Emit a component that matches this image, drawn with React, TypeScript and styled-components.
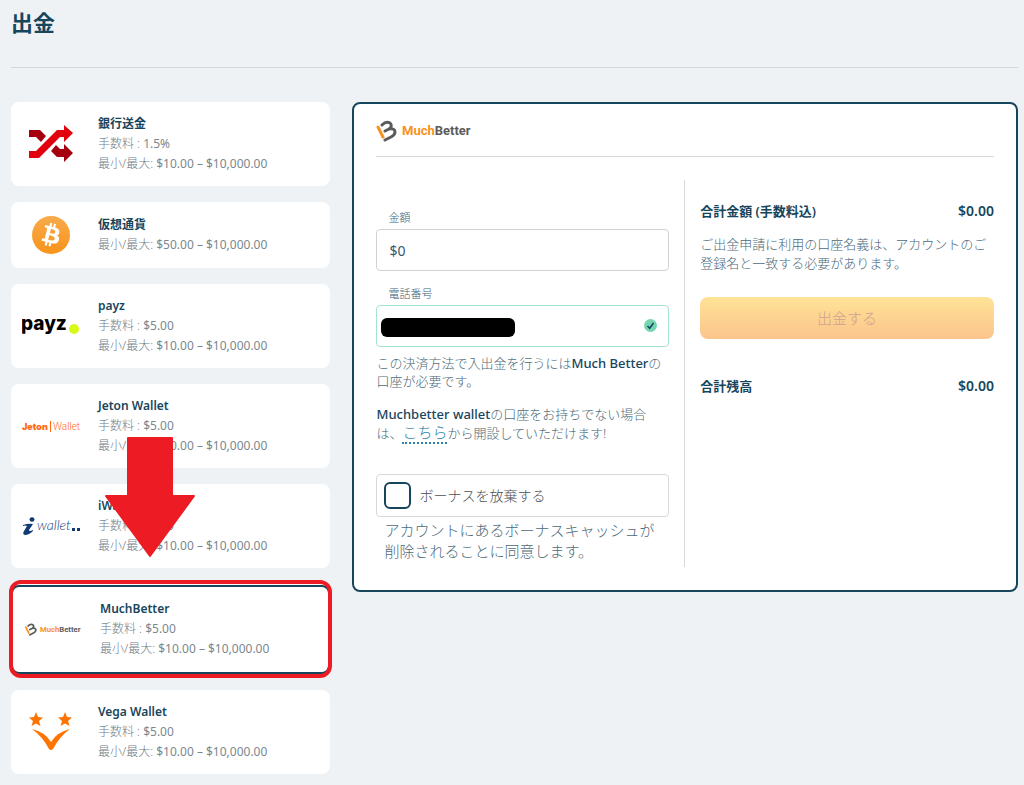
import React, { useState } from "react";
import styled, { createGlobalStyle, css } from "styled-components";

const GlobalStyle = createGlobalStyle`
  *, *::before, *::after { box-sizing: border-box; }
  body {
    margin: 0;
    background: #eef2f5;
    color: #4d6a79;
    font-family: "Noto Sans", "Noto Sans CJK JP", sans-serif;
    font-size: 13px;
    font-weight: 300;
    line-height: 18px;
  }
  h1, h2, h3, p { margin: 0; }
  input, button { font: inherit; }
`;

const ink = "#17455c";
const rule = "#d5dadd";
const red = "#ed1c24";

const Page = styled.div`
  padding: 0 6px 11px 11px;
`;

const PageHeader = styled.header`
  height: 68px;
  padding-top: 6px;
  border-bottom: 1px solid #d0d6da;
`;

const PageTitle = styled.h1`
  color: ${ink};
  font-size: 22px;
  line-height: 32px;
  font-weight: 700;
`;

const Columns = styled.main`
  display: grid;
  grid-template-columns: minmax(0, 12fr) minmax(0, 25fr);
  gap: 22px;
  align-items: start;
  padding-top: 34px;
`;

const MethodList = styled.ul`
  list-style: none;
  margin: 0;
  padding: 0;
  display: flex;
  flex-direction: column;
  gap: 16px;
`;

const MethodItem = styled.li<{ $selected?: boolean }>`
  position: relative;
  ${(p) => p.$selected && css`margin-top: 1px;`}
`;

const MethodCard = styled.button<{ $selected?: boolean }>`
  width: 100%;
  min-height: 66px;
  display: flex;
  align-items: center;
  gap: 18px;
  padding: 12px 11px;
  border: 0 solid ${ink};
  border-radius: 8px;
  background: #fff;
  color: #6f7d85;
  font-size: 12px;
  line-height: 20px;
  text-align: left;
  cursor: pointer;
  ${(p) =>
    p.$selected &&
    css`
      border-width: 2px;
      padding: 12px 11px 13px;
      box-shadow: 0 0 0 2px #fff;
    `}
`;

const LogoSlot = styled.span`
  flex: 0 0 58px;
  display: flex;
  justify-content: center;
  svg { display: block; }
`;

const MethodText = styled.span`
  display: flex;
  flex-direction: column;
`;

const MethodName = styled.strong`
  color: ${ink};
  font-weight: 600;
`;

const Figure = styled.span`
  color: #7b878e;
  font-weight: 400;
`;

const Highlight = styled.span`
  position: absolute;
  inset: -5px -2px -4px;
  border: 4px solid ${red};
  border-radius: 12px;
  pointer-events: none;
`;

const Pointer = styled.svg`
  position: absolute;
  left: 94px;
  bottom: calc(100% + 28px);
  z-index: 1;
  pointer-events: none;
`;

const Panel = styled.section`
  padding: 0 22px 23px;
  border: 2px solid ${ink};
  border-radius: 8px;
  background: #fff;
`;

const PanelHeader = styled.h2`
  height: 53px;
  padding-top: 16px;
  border-bottom: 1px solid ${rule};
  line-height: 0;
`;

const PanelBody = styled.div`
  display: grid;
  grid-template-columns: 1fr 1fr;
  margin-top: 23px;
`;

const Form = styled.form`
  min-width: 0;
  padding: 30px 15px 5px 0;
  border-right: 1px solid ${rule};
`;

const Field = styled.div`
  display: flex;
  flex-direction: column;
  gap: 3px;
  & + & { margin-top: 15px; }
`;

const FieldLabel = styled.label`
  padding-left: 12px;
  color: #3d6275;
  font-size: 11px;
  line-height: 16px;
`;

const InputBox = styled.div`
  position: relative;
`;

const TextInput = styled.input<{ $valid?: boolean }>`
  display: block;
  width: 100%;
  height: 42px;
  padding: 0 12px;
  border: 1px solid ${(p) => (p.$valid ? "#a3e5cb" : "#d0d3d5")};
  border-radius: 4px;
  background: #fff;
  color: #35596b;
  font-size: 14px;
  font-weight: 400;
`;

const Redaction = styled.span`
  position: absolute;
  left: 5px;
  top: 13px;
  width: 134px;
  height: 19px;
  border-radius: 6px;
  background: #000;
`;

const ValidMark = styled.svg`
  position: absolute;
  right: 12px;
  top: 14px;
`;

const Note = styled.p`
  margin-top: 15px;
  ${Field} + & { margin-top: 7px; }
  b { color: ${ink}; font-weight: 500; }
`;

const SignUpLink = styled.a`
  color: #2d83ac;
  font-size: 15px;
  text-decoration: none;
  border-bottom: 2px dotted #2d83ac;
`;

const BonusRow = styled.label`
  display: flex;
  align-items: center;
  gap: 8px;
  height: 43px;
  margin-top: 32px;
  padding: 0 7px;
  border: 1px solid ${rule};
  border-radius: 4px;
  color: #4b4f52;
  font-size: 14px;
`;

const CheckBox = styled.input`
  appearance: none;
  width: 27px;
  height: 27px;
  margin: 0;
  border: 2px solid ${ink};
  border-radius: 6px;
  background: #fff;
  &:checked { box-shadow: inset 0 0 0 5px #fff; background: ${ink}; }
`;

const BonusNote = styled.p`
  margin-top: 3px;
  padding-left: 8px;
  font-size: 15px;
  line-height: 21px;
`;

const Summary = styled.div`
  min-width: 0;
  padding: 21px 0 0 15px;
`;

const TotalRow = styled.div`
  display: flex;
  justify-content: space-between;
  color: ${ink};
  font-weight: 600;
  line-height: 20px;
`;

const TotalAmount = styled.span`
  font-size: 14px;
`;

const SummaryNote = styled.p`
  margin-top: 14px;
  line-height: 19px;
`;

const SubmitButton = styled.button`
  display: block;
  width: 100%;
  height: 42px;
  margin: 24px 0 37px;
  border: 0;
  border-radius: 8px;
  background: linear-gradient(#ffe396, #fbc48c);
  color: #cfa08f;
  font-size: 15px;
  line-height: 18px;
`;

function ShuffleLogo() {
  return (
    <svg width="46" height="40" viewBox="0 0 46 40" aria-hidden="true">
      <path d="M1 6h11l6 6-5 6-5-5H1z" fill="#a5000f" />
      <path d="M23 27l5-6 4 4h4v-5l9 9-9 9v-5h-7z" fill="#a5000f" />
      <path d="M1 34v-7h7L29 6h7V1l9 8-9 9v-5h-4L11 34z" fill="#e2000f" />
    </svg>
  );
}

function BitcoinLogo() {
  return (
    <svg width="38" height="38" viewBox="0 0 64 64" aria-hidden="true">
      <defs>
        <linearGradient id="coin" x1="0" y1="0" x2="0" y2="1">
          <stop offset="0" stopColor="#f9aa4b" />
          <stop offset="1" stopColor="#f7931a" />
        </linearGradient>
      </defs>
      <circle cx="32" cy="32" r="32" fill="url(#coin)" />
      <path
        fill="#fff"
        d="M46.1 27.4c.6-4.2-2.6-6.5-7-8l1.400-5.700-3.500-.9-1.400 5.600c-.9-.2-1.900-.4-2.800-.7l1.400-5.600-3.500-.9-1.400 5.700c-.8-.2-1.500-.3-2.200-.5l-4.800-1.200-.9 3.700s2.600.6 2.500.6c1.400.4 1.700 1.300 1.600 2l-3.900 15.800c-.2.4-.6 1.100-1.600.8 0 .1-2.500-.6-2.500-.6l-1.700 4 4.500 1.100 2.500.7-1.400 5.700 3.500.9 1.400-5.700c1 .3 1.900.5 2.800.7l-1.400 5.700 3.500.9 1.400-5.700c6 1.100 10.500.7 12.400-4.700 1.500-4.400-.1-6.900-3.200-8.500 2.300-.5 4-2 4.500-5.200zm-8 11.300c-1.100 4.400-8.400 2-10.800 1.400l1.900-7.700c2.400.6 10 1.800 8.900 6.300zm1.100-11.400c-1 4-7.100 2-9.100 1.500l1.800-7c2 .5 8.400 1.400 7.300 5.500z"
      />
    </svg>
  );
}

function PayzLogo() {
  return (
    <svg width="58" height="26" viewBox="0 0 58 26" aria-hidden="true">
      <text x="-1" y="17" fontFamily="Inter" fontWeight="800" fontSize="19">payz</text>
      <circle cx="52" cy="16" r="5" fill="#d8fb16" />
    </svg>
  );
}

function JetonLogo() {
  return (
    <svg width="58" height="16" viewBox="0 0 58 16" fill="#ff6a13" aria-hidden="true">
      <text x="0" y="12" fontFamily="Inter" fontWeight="900" fontSize="9">Jeton</text>
      <path d="M28 3h1v11h-1z" />
      <text x="31" y="12" fontFamily="Roboto" fontWeight="300" fontSize="10">Wallet</text>
    </svg>
  );
}

function IWalletLogo() {
  return (
    <svg width="58" height="20" viewBox="0 0 58 20" fill="#123a75" aria-hidden="true">
      <ellipse cx="10" cy="3.500" rx="2.500" ry="2.200" />
      <path d="M1 9q6-2 10-1L7 14q0 2 4 0l0 1q-4 4-8 4-3-1-1-4l3-5q-2-1-4 0z" />
      <text x="15" y="14" fontFamily="Lato" fontStyle="italic" fontSize="14">wallet</text>
      <path d="M50 12h3v3h-3zM55 12h3v3h-3z" />
    </svg>
  );
}

function MuchBetterLogo({ width }: { width: number }) {
  return (
    <svg width={width} height={Math.round((width * 22) / 96)} viewBox="0 0 96 22" role="img" aria-label="MuchBetter">
      <g fill="none" strokeWidth="3" strokeLinecap="round" strokeLinejoin="round">
        <path d="M2 7l5 10" stroke="#f7931e" />
        <path
          d="M6 5q4-4 8-2 3 3-1 6l-4 2m4-2q6-1 6 3 0 3-4 5l-6 3"
          stroke="#5b5b5d"
        />
      </g>
      <text x="26" y="15" fontFamily="Roboto" fontWeight="700" fontSize="13" fill="#5b5b5d">
        <tspan fill="#f7931e">Much</tspan>Better
      </text>
    </svg>
  );
}

function VegaLogo() {
  return (
    <svg width="44" height="40" viewBox="0 0 44 40" fill="#ff7300" aria-hidden="true">
      <path d="M7 0l2 5 5 .5-4 3.500 1.500 5L7 11.500 2.500 14 4 9 0 5.500 5 5z" />
      <path d="M36 0l2 5 5 .5-4 3.500 1.500 5-4.500-2.500L31.500 14 33 9l-4-3.500L34 5z" />
      <path d="M3 17q13 3 19 13Q28 20 41 17 31 24 24 37q-2 2-4 0Q14 25 3 17z" />
    </svg>
  );
}

type Method = {
  name: string;
  fee?: string;
  range: string;
  logo: React.ReactNode;
  selected?: boolean;
};

const methods: Method[] = [
  { name: "銀行送金", fee: "1.5%", range: "$10.00 – $10,000.00", logo: <ShuffleLogo /> },
  { name: "仮想通貨", range: "$50.00 – $10,000.00", logo: <BitcoinLogo /> },
  { name: "payz", fee: "$5.00", range: "$10.00 – $10,000.00", logo: <PayzLogo /> },
  { name: "Jeton Wallet", fee: "$5.00", range: "$10.00 – $10,000.00", logo: <JetonLogo /> },
  { name: "iWallet", fee: "$5.00", range: "$10.00 – $10,000.00", logo: <IWalletLogo /> },
  { name: "MuchBetter", fee: "$5.00", range: "$10.00 – $10,000.00", logo: <MuchBetterLogo width={58} />, selected: true },
  { name: "Vega Wallet", fee: "$5.00", range: "$10.00 – $10,000.00", logo: <VegaLogo /> },
];

export default function App() {
  const [amount, setAmount] = useState("$0");

  return (
    <>
      <GlobalStyle />
      <Page lang="ja">
        <PageHeader>
          <PageTitle>出金</PageTitle>
        </PageHeader>
        <Columns>
          <MethodList>
            {methods.map((m) => (
              <MethodItem key={m.name} $selected={m.selected}>
                <MethodCard type="button" $selected={m.selected} aria-pressed={!!m.selected}>
                  <LogoSlot>{m.logo}</LogoSlot>
                  <MethodText>
                    <MethodName>{m.name}</MethodName>
                    {m.fee && (
                      <span>
                        手数料 : <Figure>{m.fee}</Figure>
                      </span>
                    )}
                    <span>
                      最小/最大: <Figure>{m.range}</Figure>
                    </span>
                  </MethodText>
                </MethodCard>
                {m.selected && (
                  <>
                    <Highlight />
                    <Pointer width="90" height="120" viewBox="0 0 90 120" aria-hidden="true">
                      <path
                        d="M23 1h44v58h22L45 119 1 59h22z"
                        fill={red}
                        stroke={red}
                        strokeWidth="2"
                        strokeLinejoin="round"
                      />
                    </Pointer>
                  </>
                )}
              </MethodItem>
            ))}
          </MethodList>

          <Panel>
            <PanelHeader>
              <MuchBetterLogo width={96} />
            </PanelHeader>
            <PanelBody>
              <Form>
                <Field>
                  <FieldLabel htmlFor="amount">金額</FieldLabel>
                  <TextInput id="amount" value={amount} onChange={(e) => setAmount(e.target.value)} />
                </Field>
                <Field>
                  <FieldLabel htmlFor="phone">電話番号</FieldLabel>
                  <InputBox>
                    <TextInput id="phone" type="tel" $valid />
                    <Redaction />
                    <ValidMark width="13" height="13" viewBox="0 0 13 13" aria-hidden="true">
                      <circle cx="6.500" cy="6.500" r="6.500" fill="#74d6b0" />
                      <path d="M3.500 7l2.200 2.300L9.500 4" fill="none" stroke={ink} strokeWidth="1.500" />
                    </ValidMark>
                  </InputBox>
                </Field>
                <Note>
                  この決済方法で入出金を行うには<b>Much Better</b>の口座が必要です。
                </Note>
                <Note>
                  <b>Muchbetter wallet</b>の口座をお持ちでない場合は、
                  <SignUpLink href="#signup">こちら</SignUpLink>から開設していただけます!
                </Note>
                <BonusRow>
                  <CheckBox type="checkbox" />
                  ボーナスを放棄する
                </BonusRow>
                <BonusNote>アカウントにあるボーナスキャッシュが削除されることに同意します。</BonusNote>
              </Form>
              <Summary>
                <TotalRow>
                  <span>合計金額 (手数料込)</span>
                  <TotalAmount>$0.00</TotalAmount>
                </TotalRow>
                <SummaryNote>
                  ご出金申請に利用の口座名義は、アカウントのご登録名と一致する必要があります。
                </SummaryNote>
                <SubmitButton type="submit" disabled>
                  出金する
                </SubmitButton>
                <TotalRow>
                  <span>合計残高</span>
                  <TotalAmount>$0.00</TotalAmount>
                </TotalRow>
              </Summary>
            </PanelBody>
          </Panel>
        </Columns>
      </Page>
    </>
  );
}
